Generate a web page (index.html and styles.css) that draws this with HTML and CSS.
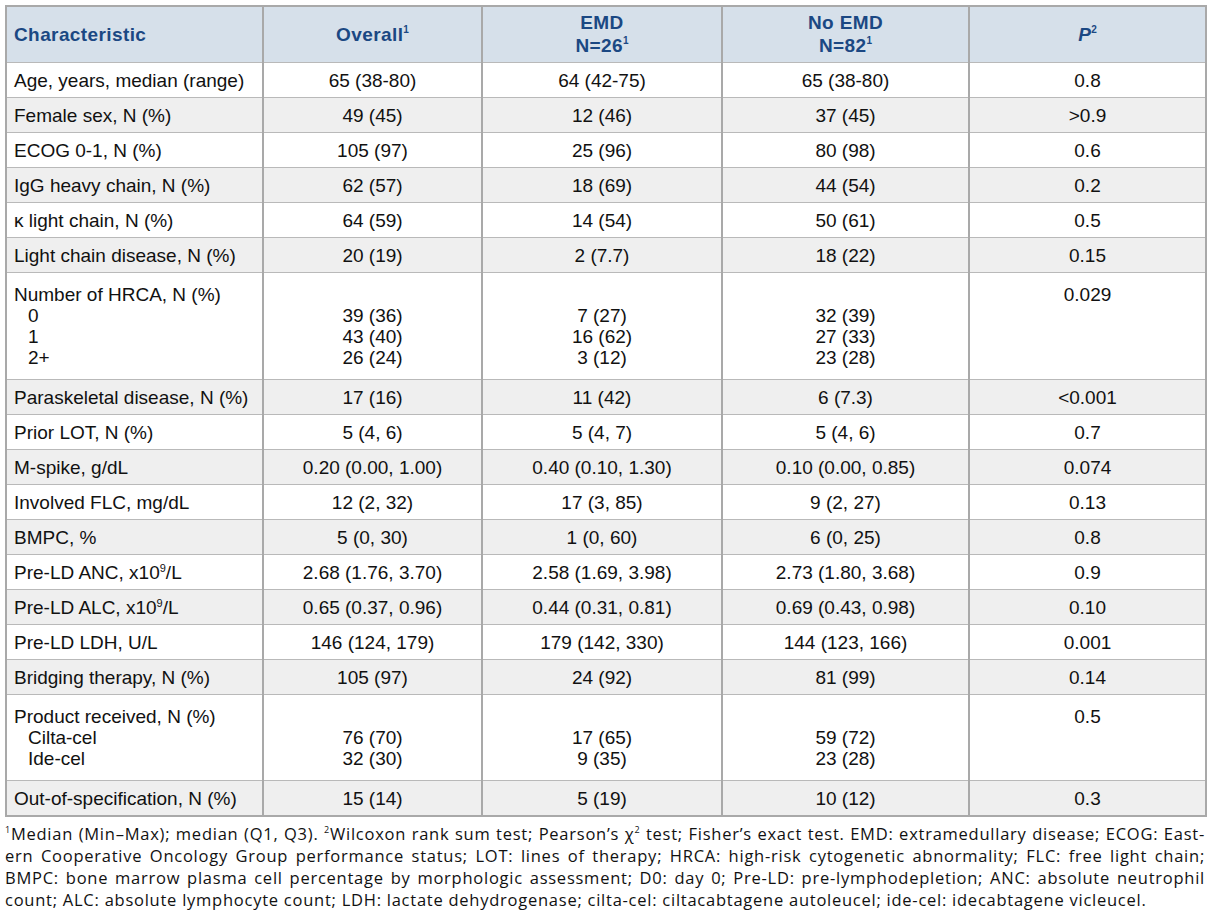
FILE: index.html
```html
<!DOCTYPE html>
<html lang="en">
<head>
<meta charset="utf-8">
<title>Baseline characteristics</title>
<link rel="stylesheet" href="styles.css">
</head>
<body>
<div class="page">
<table class="tbl">
  <colgroup>
    <col class="c1"><col class="c2"><col class="c3"><col class="c4"><col class="c5">
  </colgroup>
  <thead>
    <tr>
      <th class="left">Characteristic</th>
      <th>Overall<sup>1</sup></th>
      <th>EMD<br>N=26<sup>1</sup></th>
      <th>No EMD<br>N=82<sup>1</sup></th>
      <th><i>P</i><sup>2</sup></th>
    </tr>
  </thead>
  <tbody>
    <tr><td>Age, years, median (range)</td><td>65 (38-80)</td><td>64 (42-75)</td><td>65 (38-80)</td><td>0.8</td></tr>
    <tr><td>Female sex, N (%)</td><td>49 (45)</td><td>12 (46)</td><td>37 (45)</td><td>&gt;0.9</td></tr>
    <tr><td>ECOG 0-1, N (%)</td><td>105 (97)</td><td>25 (96)</td><td>80 (98)</td><td>0.6</td></tr>
    <tr><td>IgG heavy chain, N (%)</td><td>62 (57)</td><td>18 (69)</td><td>44 (54)</td><td>0.2</td></tr>
    <tr><td>κ light chain, N (%)</td><td>64 (59)</td><td>14 (54)</td><td>50 (61)</td><td>0.5</td></tr>
    <tr><td>Light chain disease, N (%)</td><td>20 (19)</td><td>2 (7.7)</td><td>18 (22)</td><td>0.15</td></tr>
    <tr class="multi">
      <td>Number of HRCA, N (%)<span class="sub">0</span><span class="sub">1</span><span class="sub">2+</span></td>
      <td><span class="line">&nbsp;</span><span class="line">39 (36)</span><span class="line">43 (40)</span><span class="line">26 (24)</span></td>
      <td><span class="line">&nbsp;</span><span class="line">7 (27)</span><span class="line">16 (62)</span><span class="line">3 (12)</span></td>
      <td><span class="line">&nbsp;</span><span class="line">32 (39)</span><span class="line">27 (33)</span><span class="line">23 (28)</span></td>
      <td>0.029</td>
    </tr>
    <tr><td>Paraskeletal disease, N (%)</td><td>17 (16)</td><td>11 (42)</td><td>6 (7.3)</td><td>&lt;0.001</td></tr>
    <tr><td>Prior LOT, N (%)</td><td>5 (4, 6)</td><td>5 (4, 7)</td><td>5 (4, 6)</td><td>0.7</td></tr>
    <tr><td>M-spike, g/dL</td><td>0.20 (0.00, 1.00)</td><td>0.40 (0.10, 1.30)</td><td>0.10 (0.00, 0.85)</td><td>0.074</td></tr>
    <tr><td>Involved FLC, mg/dL</td><td>12 (2, 32)</td><td>17 (3, 85)</td><td>9 (2, 27)</td><td>0.13</td></tr>
    <tr><td>BMPC, %</td><td>5 (0, 30)</td><td>1 (0, 60)</td><td>6 (0, 25)</td><td>0.8</td></tr>
    <tr><td>Pre-LD ANC, x10<sup>9</sup>/L</td><td>2.68 (1.76, 3.70)</td><td>2.58 (1.69, 3.98)</td><td>2.73 (1.80, 3.68)</td><td>0.9</td></tr>
    <tr><td>Pre-LD ALC, x10<sup>9</sup>/L</td><td>0.65 (0.37, 0.96)</td><td>0.44 (0.31, 0.81)</td><td>0.69 (0.43, 0.98)</td><td>0.10</td></tr>
    <tr><td>Pre-LD LDH, U/L</td><td>146 (124, 179)</td><td>179 (142, 330)</td><td>144 (123, 166)</td><td>0.001</td></tr>
    <tr><td>Bridging therapy, N (%)</td><td>105 (97)</td><td>24 (92)</td><td>81 (99)</td><td>0.14</td></tr>
    <tr class="multi">
      <td>Product received, N (%)<span class="sub">Cilta-cel</span><span class="sub">Ide-cel</span></td>
      <td><span class="line">&nbsp;</span><span class="line">76 (70)</span><span class="line">32 (30)</span></td>
      <td><span class="line">&nbsp;</span><span class="line">17 (65)</span><span class="line">9 (35)</span></td>
      <td><span class="line">&nbsp;</span><span class="line">59 (72)</span><span class="line">23 (28)</span></td>
      <td>0.5</td>
    </tr>
    <tr><td>Out-of-specification, N (%)</td><td>15 (14)</td><td>5 (19)</td><td>10 (12)</td><td>0.3</td></tr>
  </tbody>
</table>
<div class="notes">
  <span class="nl"><sup>1</sup>Median (Min–Max); median (Q1, Q3). <sup>2</sup>Wilcoxon rank sum test; Pearson’s χ<sup>2</sup> test; Fisher’s exact test. EMD: extramedullary disease; ECOG: East-</span>
  <span class="nl">ern Cooperative Oncology Group performance status; LOT: lines of therapy; HRCA: high-risk cytogenetic abnormality; FLC: free light chain;</span>
  <span class="nl">BMPC: bone marrow plasma cell percentage by morphologic assessment; D0: day 0; Pre-LD: pre-lymphodepletion; ANC: absolute neutrophil</span>
  <span class="nl last">count; ALC: absolute lymphocyte count; LDH: lactate dehydrogenase; cilta-cel: ciltacabtagene autoleucel; ide-cel: idecabtagene vicleucel.</span>
</div>
</div>
</body>
</html>
```
FILE: styles.css
```css
html, body {
  margin: 0;
  padding: 0;
  background: #ffffff;
}
.page {
  padding: 5px 6px 0 5px;
  width: 1200px;
}
.tbl {
  border-collapse: collapse;
  width: 1200px;
  table-layout: fixed;
  font-family: "Liberation Sans", Arial, sans-serif;
  font-size: 19px;
  color: #111111;
}
.c1 { width: 257px; }
.c2 { width: 219px; }
.c3 { width: 240px; }
.c4 { width: 247px; }
.c5 { width: 237px; }
.tbl th {
  background: #d6e0ea;
  color: #1b4883;
  font-weight: bold;
  font-size: 19px;
  line-height: 23px;
  text-align: center;
  padding: 4px 7px 5px;
  height: 46px;
  border: 2px solid #a9a9a9;
  border-bottom: 1px solid #b9b9b9;
  letter-spacing: 0.4px;
}
.tbl th.left { text-align: left; }
.tbl th sup {
  font-size: 10px;
  vertical-align: 8px;
  line-height: 0;
  letter-spacing: 0;
}
.tbl td {
  border: 2px solid #a9a9a9;
  border-top: 1px solid #b9b9b9;
  border-bottom: 1px solid #b9b9b9;
  padding: 7px 7px 6px;
  line-height: 21px;
  text-align: center;
  vertical-align: top;
  white-space: nowrap;
}
.tbl td:first-child { text-align: left; }
.tbl tbody tr:nth-child(even) td { background: #efefef; }
.tbl tbody tr:nth-child(odd) td { background: #ffffff; }
.tbl tbody tr:last-child td { border-bottom: 2px solid #a9a9a9; }
.tbl td sup {
  font-size: 11px;
  vertical-align: 7px;
  line-height: 0;
}
.tbl tr.multi td { padding-top: 11px; padding-bottom: 11px; }
.sub { display: block; padding-left: 14px; }
.line { display: block; }
.notes {
  margin-top: 6px;
  font-family: "Open Sans", "Noto Sans", sans-serif;
  font-size: 16.5px;
  letter-spacing: 0.75px;
  line-height: 22px;
  color: #111111;
}
.nl {
  display: block;
  text-align: justify;
  text-align-last: justify;
  white-space: nowrap;
}
.nl.last { text-align-last: left; }
.notes sup {
  font-size: 9px;
  vertical-align: 7px;
  line-height: 0;
}
```
